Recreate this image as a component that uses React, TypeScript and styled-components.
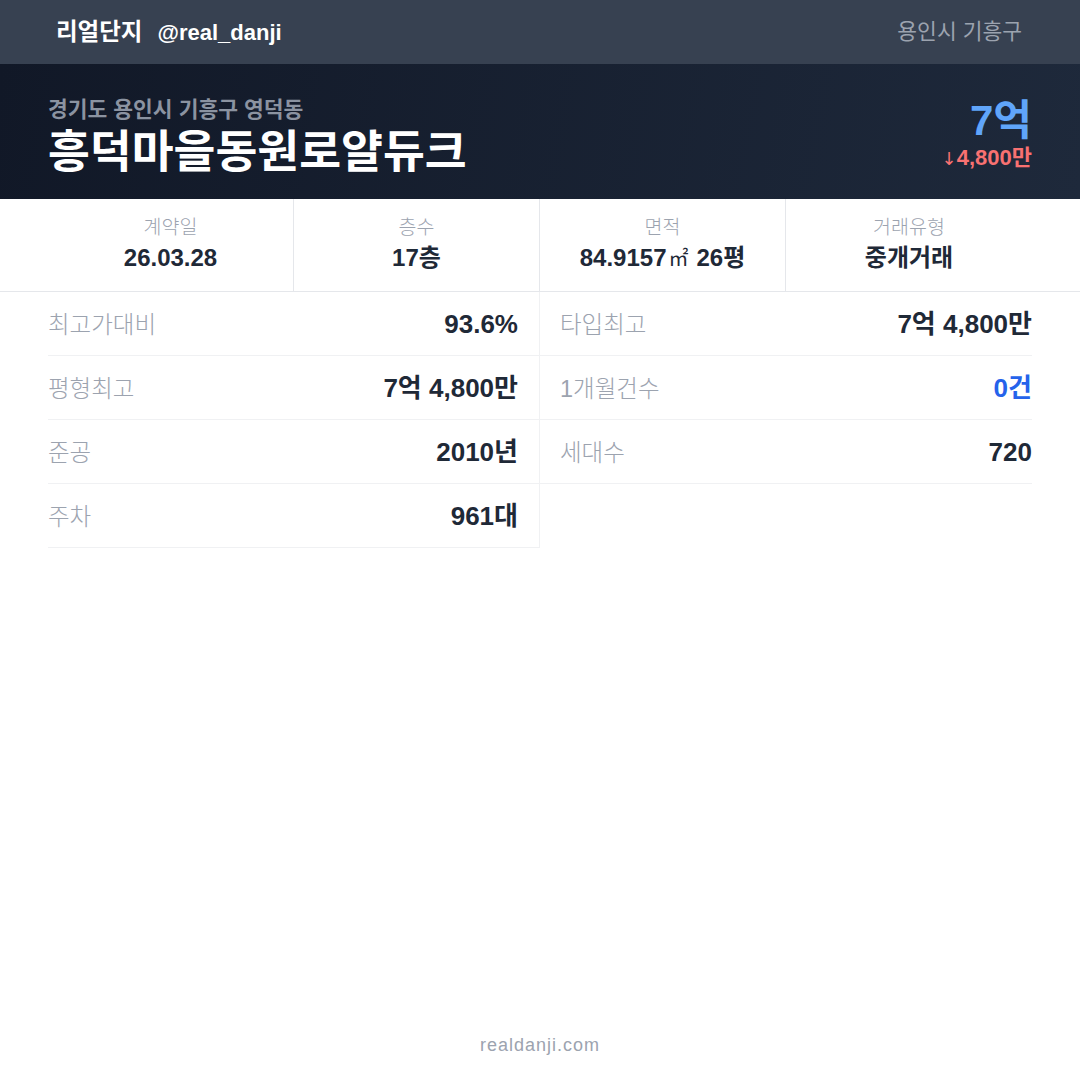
import React from 'react';
import styled, { createGlobalStyle } from 'styled-components';

const GlobalStyle = createGlobalStyle`
  html, body {
    margin: 0;
    padding: 0;
    background: #ffffff;
  }
  body {
    font-family: 'Liberation Sans', 'Noto Sans CJK KR', sans-serif;
  }
`;

const Page = styled.div`
  width: 1080px;
  height: 1080px;
  display: flex;
  flex-direction: column;
  background: #ffffff;
  overflow: hidden;
`;

const TopBar = styled.div`
  height: 64px;
  flex: 0 0 64px;
  background: #374151;
  display: flex;
  align-items: center;
  justify-content: space-between;
  padding: 0 58px 0 56px;
  box-sizing: border-box;
`;

const Brand = styled.div`
  color: #ffffff;
  font-size: 22px;
  font-weight: bold;
  line-height: 30px;
`;

const BrandName = styled.span`
  font-size: 23.5px;
  margin-right: 15px;
`;

const Region = styled.div`
  color: #9ca3af;
  font-size: 21.5px;
  line-height: 30px;
`;

const Hero = styled.div`
  height: 135px;
  flex: 0 0 135px;
  box-sizing: border-box;
  background: linear-gradient(100deg, #111827 0%, #1e293b 100%);
  display: flex;
  align-items: center;
  justify-content: space-between;
  padding: 14px 48px 0;
`;

const HeroText = styled.div`
  display: flex;
  flex-direction: column;
`;

const Address = styled.div`
  color: #8b93a1;
  font-size: 21.5px;
  font-weight: bold;
  line-height: 26px;
`;

const Title = styled.div`
  color: #ffffff;
  font-size: 45.5px;
  font-weight: bold;
  line-height: 54px;
  margin-top: 3px;
`;

const PriceBox = styled.div`
  display: flex;
  flex-direction: column;
  align-items: flex-end;
  margin-top: -10px;
`;

const Price = styled.div`
  color: #60a5fa;
  font-size: 42px;
  font-weight: bold;
  line-height: 50px;
`;

const Change = styled.div`
  color: #f87171;
  font-size: 22px;
  font-weight: bold;
  line-height: 26px;
  margin-top: -1px;
`;

const Arrow = styled.span`
  font-weight: normal;
  font-family: 'DejaVu Sans', sans-serif;
  font-size: 18px;
`;

const StatsRow = styled.div`
  display: grid;
  grid-template-columns: repeat(4, 1fr);
  padding: 0 48px;
  border-bottom: 1px solid #e5e7eb;
  height: 93px;
  box-sizing: border-box;
`;

const Stat = styled.div<{ $last?: boolean }>`
  display: flex;
  flex-direction: column;
  align-items: center;
  padding-top: 15px;
  border-right: ${(p) => (p.$last ? 'none' : '1px solid #e5e7eb')};
`;

const StatLabel = styled.div`
  color: #9ca3af;
  font-size: 19.5px;
  font-weight: 300;
  line-height: 26px;
`;

const StatValue = styled.div`
  color: #1f2937;
  font-size: 24px;
  font-weight: bold;
  line-height: 34px;
  margin-top: 1px;
`;

const Unit = styled.span`
  font-size: 20px;
  font-weight: normal;
  margin: 0 8px 0 2px;
`;

const DetailGrid = styled.div`
  display: grid;
  grid-template-columns: 1fr 1fr;
  grid-auto-rows: 64px;
  margin: 0 48px;
`;

const Cell = styled.div<{ $side: 'left' | 'right' }>`
  display: flex;
  align-items: center;
  justify-content: space-between;
  border-bottom: 1px solid #f0f1f3;
  padding: ${(p) => (p.$side === 'left' ? '0 21px 0 0' : '0 0 0 20px')};
  border-right: ${(p) => (p.$side === 'left' ? '1px solid #f0f1f3' : 'none')};
`;

const CellLabel = styled.div`
  color: #9ca3af;
  font-size: 23.5px;
  font-weight: 300;
  line-height: 32px;
  padding-top: 2px;
`;

const CellValue = styled.div<{ $accent?: boolean }>`
  color: ${(p) => (p.$accent ? '#2563eb' : '#1f2937')};
  font-size: 26px;
  font-weight: bold;
  line-height: 32px;
`;

const Footer = styled.div`
  margin-top: auto;
  padding-bottom: 24px;
  text-align: center;
  color: #9ca3af;
  font-size: 18px;
  letter-spacing: 1px;
`;

const stats = [
  { label: '계약일', value: <>26.03.28</> },
  { label: '층수', value: <>17층</> },
  {
    label: '면적',
    value: (
      <>
        84.9157<Unit>㎡</Unit>26평
      </>
    ),
  },
  { label: '거래유형', value: <>중개거래</> },
];

const details = [
  { label: '최고가대비', value: '93.6%' },
  { label: '타입최고', value: '7억 4,800만' },
  { label: '평형최고', value: '7억 4,800만' },
  { label: '1개월건수', value: '0건', accent: true },
  { label: '준공', value: '2010년' },
  { label: '세대수', value: '720' },
  { label: '주차', value: '961대' },
];

const App: React.FC = () => {
  return (
    <Page lang="ko">
      <GlobalStyle />
      <TopBar>
        <Brand>
          <BrandName>리얼단지</BrandName>@real_danji
        </Brand>
        <Region>용인시 기흥구</Region>
      </TopBar>
      <Hero>
        <HeroText>
          <Address>경기도 용인시 기흥구 영덕동</Address>
          <Title>흥덕마을동원로얄듀크</Title>
        </HeroText>
        <PriceBox>
          <Price>7억</Price>
          <Change>
            <Arrow>↓</Arrow>4,800만
          </Change>
        </PriceBox>
      </Hero>
      <StatsRow>
        {stats.map((s, i) => (
          <Stat key={s.label} $last={i === stats.length - 1}>
            <StatLabel>{s.label}</StatLabel>
            <StatValue>{s.value}</StatValue>
          </Stat>
        ))}
      </StatsRow>
      <DetailGrid>
        {details.map((d, i) => (
          <Cell key={d.label} $side={i % 2 === 0 ? 'left' : 'right'}>
            <CellLabel>{d.label}</CellLabel>
            <CellValue $accent={d.accent}>{d.value}</CellValue>
          </Cell>
        ))}
      </DetailGrid>
      <Footer>realdanji.com</Footer>
    </Page>
  );
};

export default App;
